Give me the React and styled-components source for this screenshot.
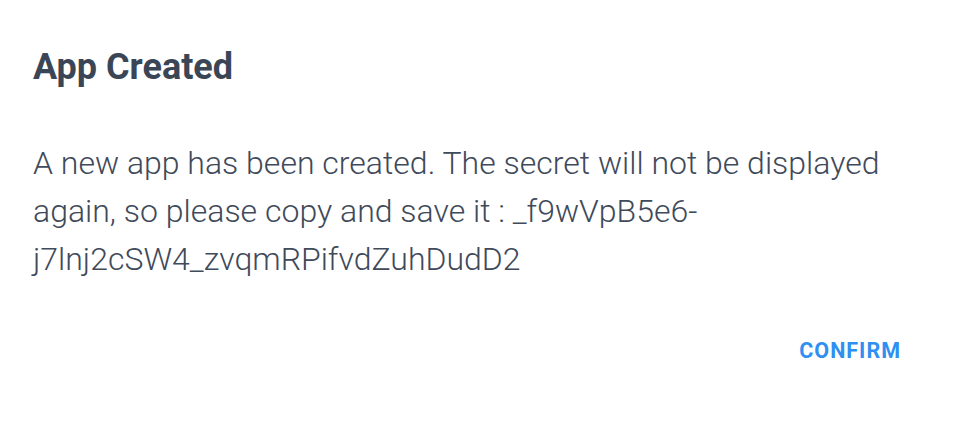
import React from "react";
import styled, { createGlobalStyle } from "styled-components";

const GlobalStyle = createGlobalStyle`
  html, body {
    margin: 0;
    padding: 0;
    background: #ffffff;
  }
  body {
    font-family: Roboto, "Noto Sans", sans-serif;
  }
`;

const Dialog = styled.div`
  width: 968px;
  height: 422px;
  box-sizing: border-box;
  padding: 45px 68px 0 33px;
  display: flex;
  flex-direction: column;
  background: #fff;
`;

const Title = styled.h2`
  margin: 0;
  font-size: 36px;
  font-weight: 700;
  line-height: 44px;
  color: #3a4656;
`;

const Content = styled.p`
  margin: 50px 0 0;
  font-size: 32px;
  font-weight: 300;
  line-height: 48px;
  color: #3f4a5a;
`;

const Actions = styled.div`
  display: flex;
  justify-content: flex-end;
  margin-top: 55px;
`;

const TextButton = styled.button`
  border: none;
  background: none;
  padding: 0;
  font-family: inherit;
  font-size: 21.5px;
  line-height: 26px;
  font-weight: 700;
  letter-spacing: 1px;
  margin-right: -1px;
  text-transform: uppercase;
  color: #2f8ff2;
  cursor: pointer;
`;

export default function App() {
  return (
    <>
      <GlobalStyle />
      <Dialog>
        <Title>App Created</Title>
        <Content>
          A new app has been created. The secret will not be displayed again,
          so please copy and save it : _f9wVpB5e6-j7lnj2cSW4_zvqmRPifvdZuhDudD2
        </Content>
        <Actions>
          <TextButton>Confirm</TextButton>
        </Actions>
      </Dialog>
    </>
  );
}
